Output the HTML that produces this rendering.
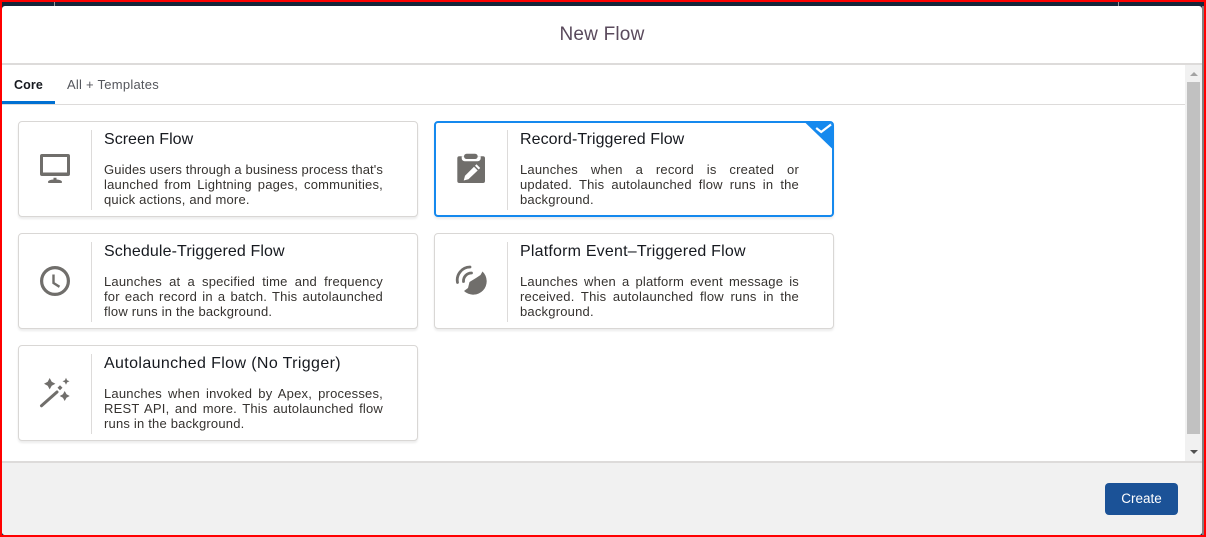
<!DOCTYPE html>
<html><head><meta charset="utf-8"><style>
html,body{margin:0;padding:0;width:1206px;height:537px;overflow:hidden;background:#16263a;font-family:"Liberation Sans",sans-serif;position:relative}
div,span,svg{position:absolute;box-sizing:border-box}
.r{background:#f00;z-index:9}
.card{width:400px;height:96px;background:#fff;border:1px solid #d9d7d5;border-radius:4px;box-shadow:0 2px 2px rgba(0,0,0,.08)}
.div{left:72px;top:8px;width:1px;height:80px;background:#dddbda}
.t{left:85px;top:8px;font-size:16px;line-height:20px;color:#16191f;white-space:nowrap;letter-spacing:.2px}
.d{left:85px;top:40px;width:279px;font-size:13px;line-height:15px;color:#35322f;letter-spacing:.2px}
.d p{margin:0;white-space:nowrap;text-align:justify;text-align-last:justify}
.d p.l{text-align:left;text-align-last:left}
.card svg{left:20px;top:30px;width:34px;height:34px}
</style></head><body>
<div class="r" style="left:0;top:0;width:1206px;height:2px"></div>
<div class="r" style="left:0;top:0;width:2px;height:537px"></div>
<div class="r" style="left:1204px;top:0;width:2px;height:537px"></div>
<div class="r" style="left:0;top:535px;width:1206px;height:2px"></div>
<div style="left:54px;top:2px;width:1px;height:4px;background:#999"></div>
<div style="left:1118px;top:2px;width:1px;height:4px;background:#999"></div>
<div style="left:1202px;top:6px;width:2px;height:529px;background:#808080"></div>

<div style="left:2px;top:6px;width:1200px;height:529px;background:#fff;border-radius:3px">
<div style="left:0;top:0;width:1200px;height:59px;text-align:center;font-size:19px;line-height:57px;color:#5a4a5c;letter-spacing:.2px">New Flow</div>
<div style="left:0;top:57px;width:1200px;height:2px;background:#dddbda"></div>
<div style="left:0;top:98px;width:1183px;height:1px;background:#dddbda"></div>
<div style="left:0;top:95px;width:53px;height:3px;background:#0070d2"></div>
<div style="left:12px;top:70px;font-size:12.5px;line-height:18px;font-weight:bold;color:#16191f;letter-spacing:.1px">Core</div>
<div style="left:65px;top:70px;font-size:13px;line-height:18px;color:#54565c;letter-spacing:.25px;white-space:nowrap">All + Templates</div>
<div style="left:0;top:455px;width:1200px;height:74px;background:#f1f1f1;border-top:2px solid #dddbda;border-radius:0 0 3px 3px"></div>
<div style="left:1103px;top:477px;width:73px;height:32px;background:#1b5297;border-radius:4px;color:#fff;font-size:13.5px;line-height:31px;text-align:center">Create</div>
<div style="left:1183px;top:59px;width:17px;height:396px;background:#f1f1f1"></div>
<div style="left:1185px;top:76px;width:13px;height:352px;background:#c1c1c1"></div>
<div style="left:1188px;top:66px;width:0;height:0;border:4px solid transparent;border-top:0;border-bottom:4px solid #a3a3a3"></div>
<div style="left:1188px;top:444px;width:0;height:0;border:4px solid transparent;border-bottom:0;border-top:4px solid #505050"></div>
</div>

<div class="card" style="left:18px;top:121px"><div class="div"></div>
<svg viewBox="0 0 34 34"><path fill-rule="evenodd" fill="#706e6b" d="M3 2h26a2 2 0 0 1 2 2v18a2 2 0 0 1-2 2H3a2 2 0 0 1-2-2V4a2 2 0 0 1 2-2zM4 5v15.500h24V5z"/><path fill="#706e6b" d="M14.500 25.700h3v1.800c3 .2 5.500 1 5.500 2.500 0 .7-.4 1-1 1H10c-.6 0-1-.3-1-1 0-1.500 2.500-2.300 5.500-2.500z"/></svg>
<div class="t" style="letter-spacing:.02px">Screen Flow</div><div class="d"><p style="letter-spacing:.12px">Guides users through a business process that's</p><p>launched from Lightning pages, communities,</p><p class="l">quick actions, and more.</p></div></div>

<div class="card" style="left:434px;top:121px;border:2px solid #1589ee;overflow:hidden"><div class="div" style="left:71px;top:7px"></div>
<svg viewBox="0 0 34 34" style="left:19px;top:29px"><path fill="#706e6b" d="M4.300 4.300h23.700a2 2 0 0 1 2 2V29a2 2 0 0 1-2 2H4.300a2 2 0 0 1-2-2V6.300a2 2 0 0 1 2-2z"/><path fill="#fff" d="M6.700 4.300h19v2a3 3 0 0 1-3 3H9.700a3 3 0 0 1-3-3z"/><rect x="9" y="1.700" width="13.700" height="5.300" rx="2.600" fill="#706e6b"/><path fill="#fff" d="M8.700 28.500l1.300-4.700L19 14.800l3.700 3.700-9.300 8.700zM20 13.800l1.500-1.500 3.700 3.700-1.500 1.500z"/></svg>
<div class="t" style="left:84px;top:7px;letter-spacing:.06px">Record-Triggered Flow</div><div class="d" style="left:84px;top:39px"><p>Launches when a record is created or</p><p>updated. This autolaunched flow runs in the</p><p class="l">background.</p></div>
<svg viewBox="0 0 30 30" style="left:367px;top:-2px;width:31px;height:30px"><path d="M0 0H30V29z" fill="#1589ee"/><path d="M12.700 7l5 4L27.500 3.500" fill="none" stroke="#fff" stroke-width="2.200"/></svg></div>

<div class="card" style="left:18px;top:233px"><div class="div"></div>
<svg viewBox="0 0 34 34"><circle cx="16" cy="17" r="13.400" fill="none" stroke="#706e6b" stroke-width="3.200"/><path d="M14.500 10.500v8.500l6 3.800" fill="none" stroke="#706e6b" stroke-width="2.400"/></svg>
<div class="t" style="letter-spacing:.11px">Schedule-Triggered Flow</div><div class="d"><p>Launches at a specified time and frequency</p><p>for each record in a batch. This autolaunched</p><p class="l">flow runs in the background.</p></div></div>

<div class="card" style="left:434px;top:233px"><div class="div"></div>
<svg viewBox="0 0 34 34"><path fill="#706e6b" d="M27.500 7.500A12.800 12.800 0 1 1 9 27l4-3 1.500-6 6.500-4 4.500-3z"/><path fill="none" stroke="#706e6b" stroke-width="2.800" stroke-linecap="round" d="M2.500 18.500A13 13 0 0 1 15 3"/><path fill="none" stroke="#706e6b" stroke-width="2.800" stroke-linecap="round" d="M8.500 17.500A8 8 0 0 1 16.500 9"/></svg>
<div class="t">Platform Event–Triggered Flow</div><div class="d"><p>Launches when a platform event message is</p><p>received. This autolaunched flow runs in the</p><p class="l">background.</p></div></div>

<div class="card" style="left:18px;top:345px"><div class="div"></div>
<svg viewBox="0 0 34 34"><path stroke="#706e6b" stroke-width="3" stroke-linecap="round" d="M2.500 29.800L18 16"/><g fill="#706e6b"><path d="M10.700 2l2 3.700 3.700 2-3.700 2-2 3.700-2-3.700-3.700-2 3.700-2z"/><path d="M27 1.800l1.100 2.400 2.400 1.100-2.400 1.100L27 8.800l-1.100-2.400-2.400-1.100 2.400-1.100z"/><path d="M25.700 15l1.800 3.200 3.200 1.800-3.200 1.800-1.800 3.200-1.800-3.200-3.200-1.800 3.200-1.800z"/><path d="M21 9.200l2.500 2.500-2.500 2.500-2.500-2.500z"/></g></svg>
<div class="t" style="letter-spacing:.37px">Autolaunched Flow (No Trigger)</div><div class="d"><p>Launches when invoked by Apex, processes,</p><p>REST API, and more. This autolaunched flow</p><p class="l">runs in the background.</p></div></div>
</body></html>
